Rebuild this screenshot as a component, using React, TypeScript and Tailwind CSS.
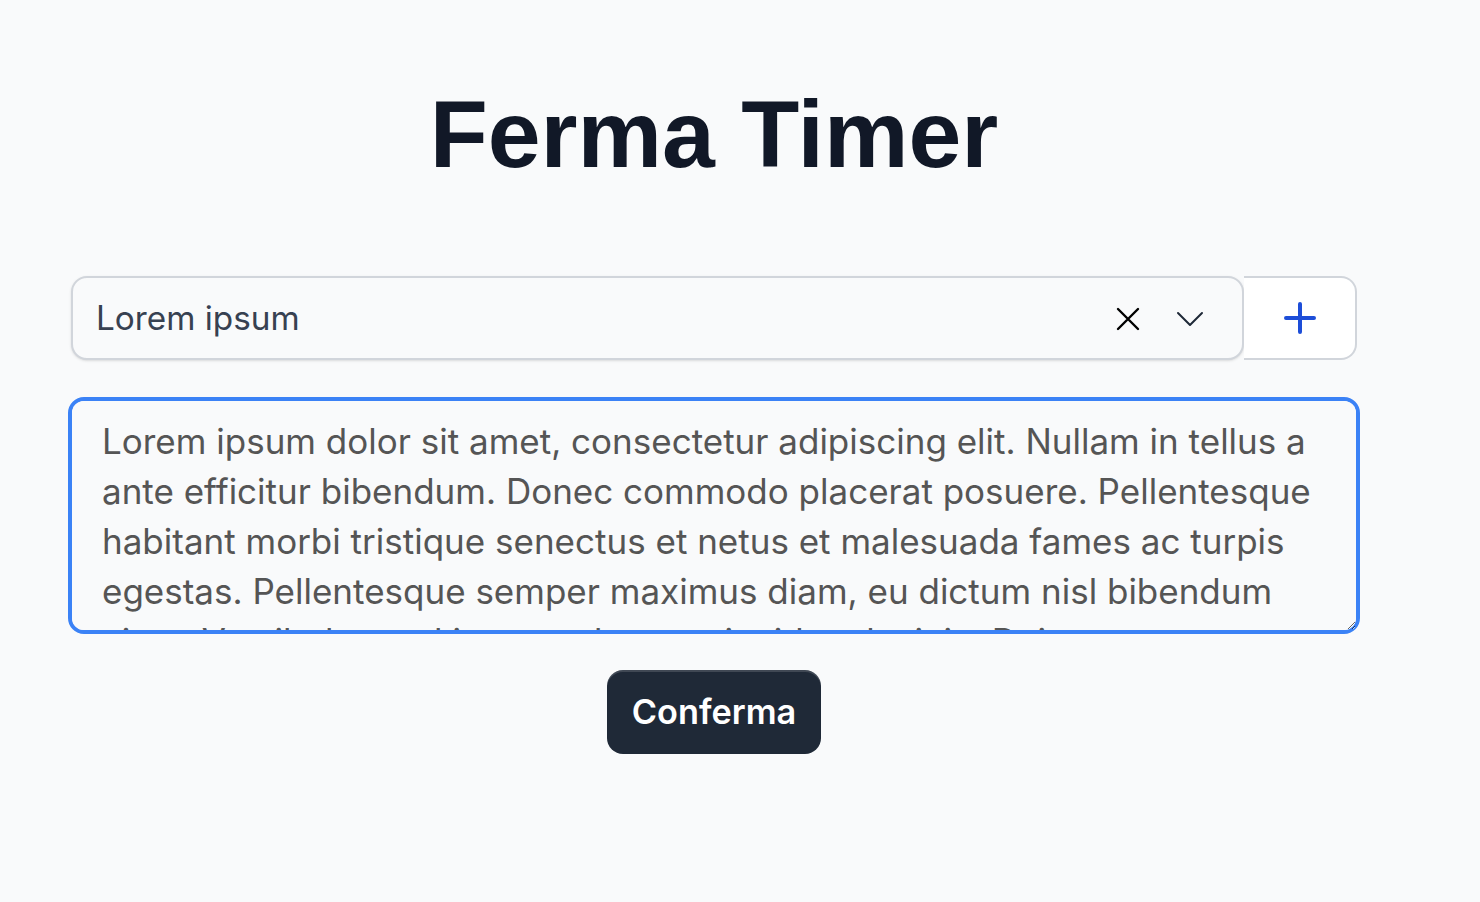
const testo =
    "Lorem ipsum dolor sit amet, consectetur adipiscing elit. Nullam in tellus a ante efficitur bibendum. Donec commodo placerat posuere. Pellentesque habitant morbi tristique senectus et netus et malesuada fames ac turpis egestas. Pellentesque semper maximus diam, eu dictum nisl bibendum vitae. Vestibulum vel justo sed tortor tincidunt lacinia. Duis consectetur, magna a pharetra mattis, nibh arcu facilisis urna, quis gravida ante sapien sed est.";

function IconX() {
    return (
        <svg width="24" height="24" viewBox="0 0 24 24" fill="none" stroke="currentColor" strokeWidth="2.4" strokeLinecap="round">
            <path d="M2 2 22 22M22 2 2 22" />
        </svg>
    );
}

function IconChevron() {
    return (
        <svg width="28" height="16" viewBox="0 0 28 16" fill="none" stroke="currentColor" strokeWidth="2" strokeLinecap="round" strokeLinejoin="round">
            <path d="M2 2 14 14 26 2" />
        </svg>
    );
}

function IconPlus() {
    return (
        <svg width="32" height="32" viewBox="0 0 32 32" fill="none" stroke="currentColor" strokeWidth="4" strokeLinecap="round">
            <path d="M16 2v28M2 16h28" />
        </svg>
    );
}

export default function App() {
    return (
        <div className="min-h-screen bg-[#f9fafb] font-['Inter',sans-serif]">
            <div className="w-[1292px] ml-[68px] pt-[87px] flex flex-col items-center">
                <h1 className="font-['Liberation_Sans',Arial,sans-serif] text-[95px] leading-none font-bold text-[#111827]">
                    Ferma Timer
                </h1>

                {/* select + add */}
                <div className="mt-[94px] w-full px-[3px] flex">
                    <div className="flex-1 h-[84px] flex items-center border-2 border-[#d1d5db] rounded-2xl bg-[#f9fafb] shadow-sm pl-[23px] pr-[38px] pt-[2px]">
                        <span className="flex-1 text-[33.3px] text-[#374151]">Lorem ipsum</span>
                        <span className="text-black"><IconX /></span>
                        <span className="ml-[36px] text-[#1f2937]"><IconChevron /></span>
                    </div>
                    <button className="w-[113px] h-[84px] flex items-center justify-center bg-white border-2 border-l-0 border-[#d1d5db] rounded-r-2xl">
                        <span className="text-[#1d4ed8]"><IconPlus /></span>
                    </button>
                </div>

                <textarea
                    className="mt-[37px] w-full h-[237px] block border-4 border-[#3b82f6] rounded-2xl bg-[#f9fafb] pl-[30px] pr-[28px] pt-[15px] text-[35px] leading-[50px] text-[#555555] outline-none"
                    defaultValue={testo}
                />

                <button className="mt-[36px] h-[84px] px-[25px] rounded-2xl bg-[#1f2937] text-white text-[34.3px] font-semibold shadow-[inset_0_2px_0_rgba(255,255,255,0.15)]">
                    Conferma
                </button>
            </div>
        </div>
    );
}
